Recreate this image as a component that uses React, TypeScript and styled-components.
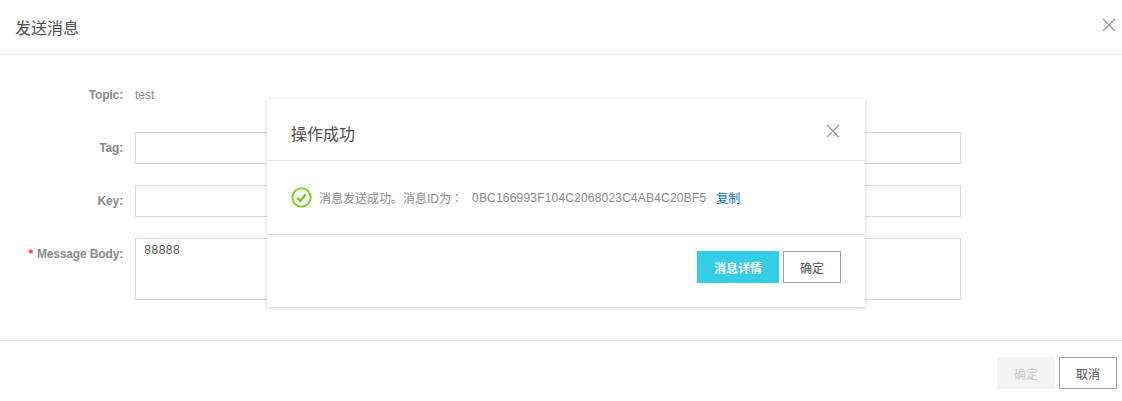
import styled, { createGlobalStyle } from "styled-components";

const GlobalStyle = createGlobalStyle`
  html, body {
    margin: 0;
    padding: 0;
    background: #fff;
    overflow: hidden;
  }
  body {
    font-family: "Liberation Sans", Arial, "Noto Sans CJK SC", sans-serif;
    font-size: 12px;
    color: #333;
  }
`;

const Page = styled.div`
  position: relative;
  width: 1122px;
  height: 401px;
  display: flex;
  flex-direction: column;
`;

const Header = styled.div`
  height: 54px;
  box-sizing: content-box;
  border-bottom: 1px solid #e3e4e6;
  display: flex;
  align-items: center;
  justify-content: space-between;
  padding: 0 5px 0 15px;
`;

const Title = styled.h2<{ $drop: number }>`
  margin: ${(p) => p.$drop}px 0 0;
  font-size: 16px;
  font-weight: 400;
  color: #4d4d4d;
  line-height: 20px;
`;

const CloseButton = styled.button<{ $lift?: number; $drop?: number }>`
  width: 16px;
  height: 16px;
  padding: 0;
  margin: ${(p) => p.$drop ?? 0}px 0 ${(p) => p.$lift ?? 0}px;
  border: 0;
  background: none;
  display: block;
  cursor: pointer;
`;

const Form = styled.div`
  height: 286px;
  border-bottom: 1px solid #e3e4e6;
  box-sizing: border-box;
  display: flex;
  flex-direction: column;
  padding-top: 24px;
`;

const Row = styled.div<{ $h: number; $gap: number }>`
  display: flex;
  gap: 11px;
  height: ${(p) => p.$h}px;
  margin-bottom: ${(p) => p.$gap}px;
`;

const Label = styled.label`
  width: 124px;
  box-sizing: border-box;
  padding: 6px 1px 0 0;
  flex: none;
  text-align: right;
  font-weight: 700;
  letter-spacing: -0.15px;
  color: #888a8c;
  line-height: 20px;
`;

const Star = styled.span`
  color: #f33;
  margin-right: 4px;
`;

const Value = styled.span`
  color: #888a8c;
  line-height: 20px;
  padding-top: 6px;
`;

const Input = styled.input`
  width: 826px;
  height: 32px;
  box-sizing: border-box;
  border: 1px solid #d7d8d9;
  background: #fff;
  padding: 0 8px;
  outline: none;
`;

const TextArea = styled.textarea`
  width: 826px;
  height: 62px;
  box-sizing: border-box;
  border: 1px solid #d7d8d9;
  background: #fff;
  padding: 5px 8px;
  margin: 0;
  resize: none;
  outline: none;
  font-family: "Liberation Mono", monospace;
  font-size: 12px;
  line-height: 14px;
  color: #555;
`;

const Footer = styled.div`
  display: flex;
  justify-content: flex-end;
  gap: 4px;
  padding: 16px 5px 0 0;
`;

const Button = styled.button<{ $variant?: "primary" | "disabled" }>`
  width: ${(p) => (p.$variant === "primary" ? 82 : 58)}px;
  height: 32px;
  box-sizing: border-box;
  padding: 0;
  font-family: inherit;
  font-size: 12px;
  font-weight: ${(p) => (p.$variant === "primary" ? 700 : 400)};
  border: 1px solid
    ${(p) =>
      p.$variant === "primary"
        ? "#33cde5"
        : p.$variant === "disabled"
          ? "#f4f4f4"
          : "#a0a2a3"};
  background: ${(p) =>
    p.$variant === "primary"
      ? "#33cde5"
      : p.$variant === "disabled"
        ? "#f4f4f4"
        : "#fff"};
  color: ${(p) =>
    p.$variant === "primary"
      ? "#fff"
      : p.$variant === "disabled"
        ? "#c8c8c8"
        : "#4d4d4d"};
`;

const Dialog = styled.div`
  position: absolute;
  left: 267px;
  top: 99px;
  width: 598px;
  height: 208px;
  background: #fff;
  box-shadow: 0 1px 4px rgba(0, 0, 0, 0.2);
  display: flex;
  flex-direction: column;
`;

const DialogHeader = styled.div`
  height: 62px;
  flex: none;
  box-sizing: border-box;
  border-bottom: 1px solid #e3e4e6;
  display: flex;
  align-items: center;
  justify-content: space-between;
  padding: 0 24px;
`;

const DialogBody = styled.div`
  height: 74px;
  flex: none;
  box-sizing: border-box;
  border-bottom: 1px solid #e3e4e6;
  display: flex;
  align-items: center;
  padding: 0 24px;
  color: #888a8c;
`;

const Colon = styled.span`
  font-family: "Noto Sans CJK TC", sans-serif;
`;

const MessageId = styled.span`
  margin-left: 9px;
  margin-right: 10px;
  letter-spacing: 0.19px;
`;

const CopyLink = styled.a`
  color: #0070cc;
`;

const SuccessIcon = styled.svg`
  width: 21px;
  height: 21px;
  margin-right: 7px;
  flex: none;
`;

const DialogFooter = styled.div`
  display: flex;
  justify-content: flex-end;
  gap: 4px;
  padding: 16px 24px 0 0;
`;

const CrossIcon = () => (
  <svg width="16" height="16" viewBox="0 0 16 16" fill="none" stroke="#999b9d" strokeWidth="1.3">
    <path d="M2 2 L14 14 M14 2 L2 14" />
  </svg>
);

export default function App() {
  return (
    <Page>
      <GlobalStyle />
      <Header>
        <Title $drop={4}>发送消息</Title>
        <CloseButton aria-label="关闭" $lift={4}>
          <CrossIcon />
        </CloseButton>
      </Header>
      <Form>
        <Row $h={32} $gap={21}>
          <Label>Topic:</Label>
          <Value>test</Value>
        </Row>
        <Row $h={32} $gap={21}>
          <Label>Tag:</Label>
          <Input />
        </Row>
        <Row $h={32} $gap={21}>
          <Label>Key:</Label>
          <Input />
        </Row>
        <Row $h={62} $gap={0}>
          <Label>
            <Star>*</Star>Message Body:
          </Label>
          <TextArea defaultValue="88888" />
        </Row>
      </Form>
      <Footer>
        <Button $variant="disabled">确定</Button>
        <Button>取消</Button>
      </Footer>
      <Dialog>
        <DialogHeader>
          <Title $drop={11}>操作成功</Title>
          <CloseButton aria-label="关闭" $drop={3}>
            <CrossIcon />
          </CloseButton>
        </DialogHeader>
        <DialogBody>
          <SuccessIcon viewBox="0 0 21 21" fill="none">
            <circle cx="10.5" cy="10.5" r="9.2" stroke="#7ed321" strokeWidth="2" />
            <path d="M6.2 10.8 L9.4 14 L14.6 7.2" stroke="#6cc40f" strokeWidth="2.2" />
          </SuccessIcon>
          <span>
            消息发送成功。消息ID为<Colon>：</Colon>
          </span>
          <MessageId>0BC166993F104C2068023C4AB4C20BF5</MessageId>
          <CopyLink>复制</CopyLink>
        </DialogBody>
        <DialogFooter>
          <Button $variant="primary">消息详情</Button>
          <Button>确定</Button>
        </DialogFooter>
      </Dialog>
    </Page>
  );
}
